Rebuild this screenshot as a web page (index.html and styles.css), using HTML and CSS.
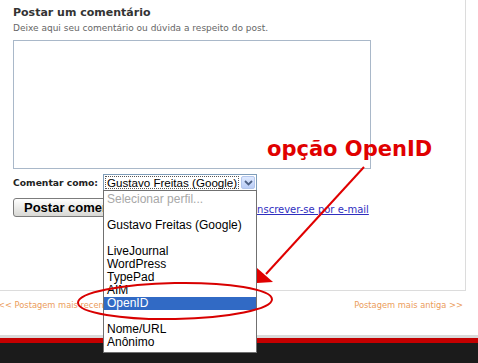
FILE: index.html
```html
<!DOCTYPE html>
<html lang="pt-BR">
<head>
    <meta charset="UTF-8">
    <meta name="viewport" content="width=device-width, initial-scale=1.0">
    <title>Postar um comentário</title>
    <link rel="stylesheet" href="styles.css">
</head>
<body>
    <div class="page">
        <div class="post-panel">
            <div class="comments">
                <h4>Postar um comentário</h4>
                <p class="comment-note">Deixe aqui seu comentário ou dúvida a respeito do post.</p>
                <textarea class="comment-box"></textarea>

                <div class="identity-row">
                    <label for="profile">Comentar como:</label>
                    <div class="profile-select" id="profile">
                        <span class="current">Gustavo Freitas (Google)</span>
                        <span class="drop-btn">
                            <svg width="9" height="6" viewBox="0 0 9 6"><path d="M1 1 L4.5 4.5 L8 1" fill="none" stroke="#4d6185" stroke-width="1.8"/></svg>
                        </span>
                    </div>
                </div>

                <div class="actions">
                    <button type="button">Postar comentário</button>
                    <a href="#" class="subscribe">Inscrever-se por e-mail</a>
                </div>
            </div>
        </div>

        <div class="pager">
            <a href="#">&lt;&lt; Postagem mais recente</a>
            <a href="#">Postagem mais antiga &gt;&gt;</a>
        </div>

        <div class="footer"></div>

        <!-- open dropdown of the select -->
        <ul class="profile-list">
            <li class="muted">Selecionar perfil...</li>
            <li class="blank"></li>
            <li>Gustavo Freitas (Google)</li>
            <li class="blank"></li>
            <li>LiveJournal</li>
            <li>WordPress</li>
            <li>TypePad</li>
            <li>AIM</li>
            <li class="selected">OpenID</li>
            <li class="blank"></li>
            <li>Nome/URL</li>
            <li>Anônimo</li>
        </ul>

        <!-- hand drawn annotation -->
        <div class="callout">opção OpenID</div>
        <svg class="markup" width="478" height="363" viewBox="0 0 478 363">
            <line x1="364" y1="167" x2="266" y2="274" stroke="#e00000" stroke-width="2"/>
            <polygon points="257,268 273,282 257,283" fill="#e00000"/>
            <ellipse cx="175" cy="301" rx="97" ry="18" fill="none" stroke="#d80000" stroke-width="2" transform="rotate(-1 175 301)"/>
        </svg>
    </div>
</body>
</html>
```

FILE: styles.css
```css
body {
    margin: 0;
    background: #fff;
    font-family: "DejaVu Sans", Verdana, sans-serif;
}
.page {
    position: relative;
    width: 478px;
    height: 363px;
    overflow: hidden;
}
.post-panel {
    width: 465px;
    height: 290px;
    border-right: 1px solid #dcdcdc;
    border-bottom: 1px solid #dcdcdc;
}
.comments {
    padding: 6px 0 0 13px;
}
h4 {
    margin: 0;
    font-size: 11px;
    line-height: 14px;
    color: #333;
}
.comment-note {
    margin: 2px 0 0;
    font-size: 9px;
    line-height: 12px;
    color: #666;
}
.comment-box {
    display: block;
    box-sizing: border-box;
    width: 358px;
    height: 129px;
    margin: 6px 0 0;
    border: 1px solid #a9b8c9;
    resize: none;
}
.identity-row {
    display: flex;
    align-items: center;
    margin-top: 5px;
}
.identity-row label {
    width: 90px;
    font-size: 9.2px;
    font-weight: bold;
    color: #222;
}
.profile-select {
    display: flex;
    box-sizing: border-box;
    width: 154px;
    height: 17px;
    border: 1px solid #7f9db9;
    font-family: "Liberation Sans", Arial, sans-serif;
    font-size: 11.6px;
}
.profile-select .current {
    flex: 1;
    min-width: 0;
    margin: 1px 2px 1px 1px;
    padding-left: 1px;
    line-height: 12px;
    border: 1px dotted #555;
    color: #000;
    white-space: nowrap;
}
.drop-btn {
    display: flex;
    align-items: center;
    justify-content: center;
    flex: none;
    width: 12px;
    margin: 1px 1px 1px 0;
    border: 1px solid #b3c6ec;
    border-radius: 2px;
    background: linear-gradient(#dfe9ff, #b9cdf6);
}
.actions {
    display: flex;
    align-items: center;
    margin-top: 7px;
}
.actions button {
    height: 19px;
    padding: 0 10px;
    border: 1px solid #7c7c7c;
    border-radius: 3px;
    background: linear-gradient(#fff, #d8d8d4);
    font-family: "Liberation Sans", Arial, sans-serif;
    font-size: 13px;
    font-weight: bold;
    color: #000;
}
.subscribe {
    margin-left: 105px;
    margin-top: 4px;
    font-size: 10px;
    color: #2f2fbf;
}
.pager {
    display: flex;
    justify-content: space-between;
    height: 44px;
    box-sizing: border-box;
    padding: 8px 15px 0 0;
    font-size: 8.3px;
    line-height: 12px;
}
.pager a {
    color: #eb9d5c;
    text-decoration: none;
}
.pager a:first-child {
    margin-left: -2px;
}
.footer {
    height: 30px;
    border-top: 3px solid #dadada;
    background: linear-gradient(#c40000 0, #c40000 5px, #1b1b1b 5px);
}
.profile-list {
    position: absolute;
    left: 103px;
    top: 190px;
    width: 152px;
    height: 159px;
    margin: 0;
    padding: 2px 0 0;
    box-sizing: content-box;
    list-style: none;
    border: 1px solid #707070;
    background: #fff;
    font-family: "Liberation Sans", Arial, sans-serif;
    font-size: 12px;
    line-height: 13px;
}
.profile-list li {
    height: 13px;
    padding-left: 3px;
    color: #000;
}
.profile-list .muted {
    color: #a8a8a8;
}
.profile-list .selected {
    background: #316ac5;
    color: #fff;
}
.callout {
    position: absolute;
    left: 267px;
    top: 137px;
    font-size: 21px;
    line-height: 24px;
    font-weight: bold;
    color: #e00000;
    white-space: nowrap;
}
.markup {
    position: absolute;
    left: 0;
    top: 0;
}
```
